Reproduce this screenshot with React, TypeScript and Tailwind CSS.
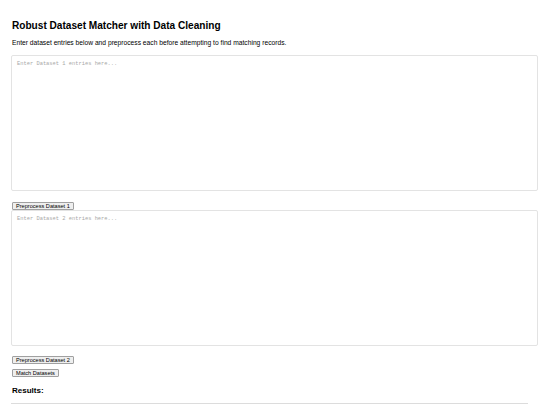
export default function App() {
  const btn =
    "block h-[8px] px-[3px] bg-[#efefef] border border-[#a0a0a0] rounded-[1px] text-[5.6px] leading-[6px] whitespace-nowrap text-black font-['Liberation_Sans',Arial,sans-serif]";
  const area =
    "block w-[527px] h-[136px] border border-[#e3e3e3] rounded-[2px] px-[5px] py-[5px] bg-white font-['Liberation_Mono','Courier_New',monospace] text-[5.4px] leading-[7px] placeholder:text-[#a8a8a8] resize-none outline-none";

  return (
    <div className="min-h-[405px] bg-white px-[11px] pt-[20px] font-['Liberation_Sans',Arial,sans-serif] text-black overflow-hidden">
      <h2 className="ml-[1px] text-[10.1px] leading-[12px] font-bold">
        Robust Dataset Matcher with Data Cleaning
      </h2>
      <p className="ml-[1px] mt-[7px] text-[6.7px] leading-[8px]">
        Enter dataset entries below and preprocess each before attempting to find matching records.
      </p>

      <textarea className={`mt-[8px] ${area}`} placeholder="Enter Dataset 1 entries here..." />
      <button className={`mt-[11px] ml-[1px] ${btn}`}>Preprocess Dataset 1</button>
      <textarea className={area} placeholder="Enter Dataset 2 entries here..." />

      <button className={`mt-[10px] ml-[1px] ${btn}`}>Preprocess Dataset 2</button>
      <button className={`mt-[5px] ml-[1px] ${btn}`}>Match Datasets</button>

      <h3 className="ml-[1px] mt-[9px] text-[8px] leading-[9px] font-bold">Results:</h3>
      <div className="mt-[8px] w-[517px] h-[20px] border-t border-[#dcdcdc]" />
    </div>
  );
}
